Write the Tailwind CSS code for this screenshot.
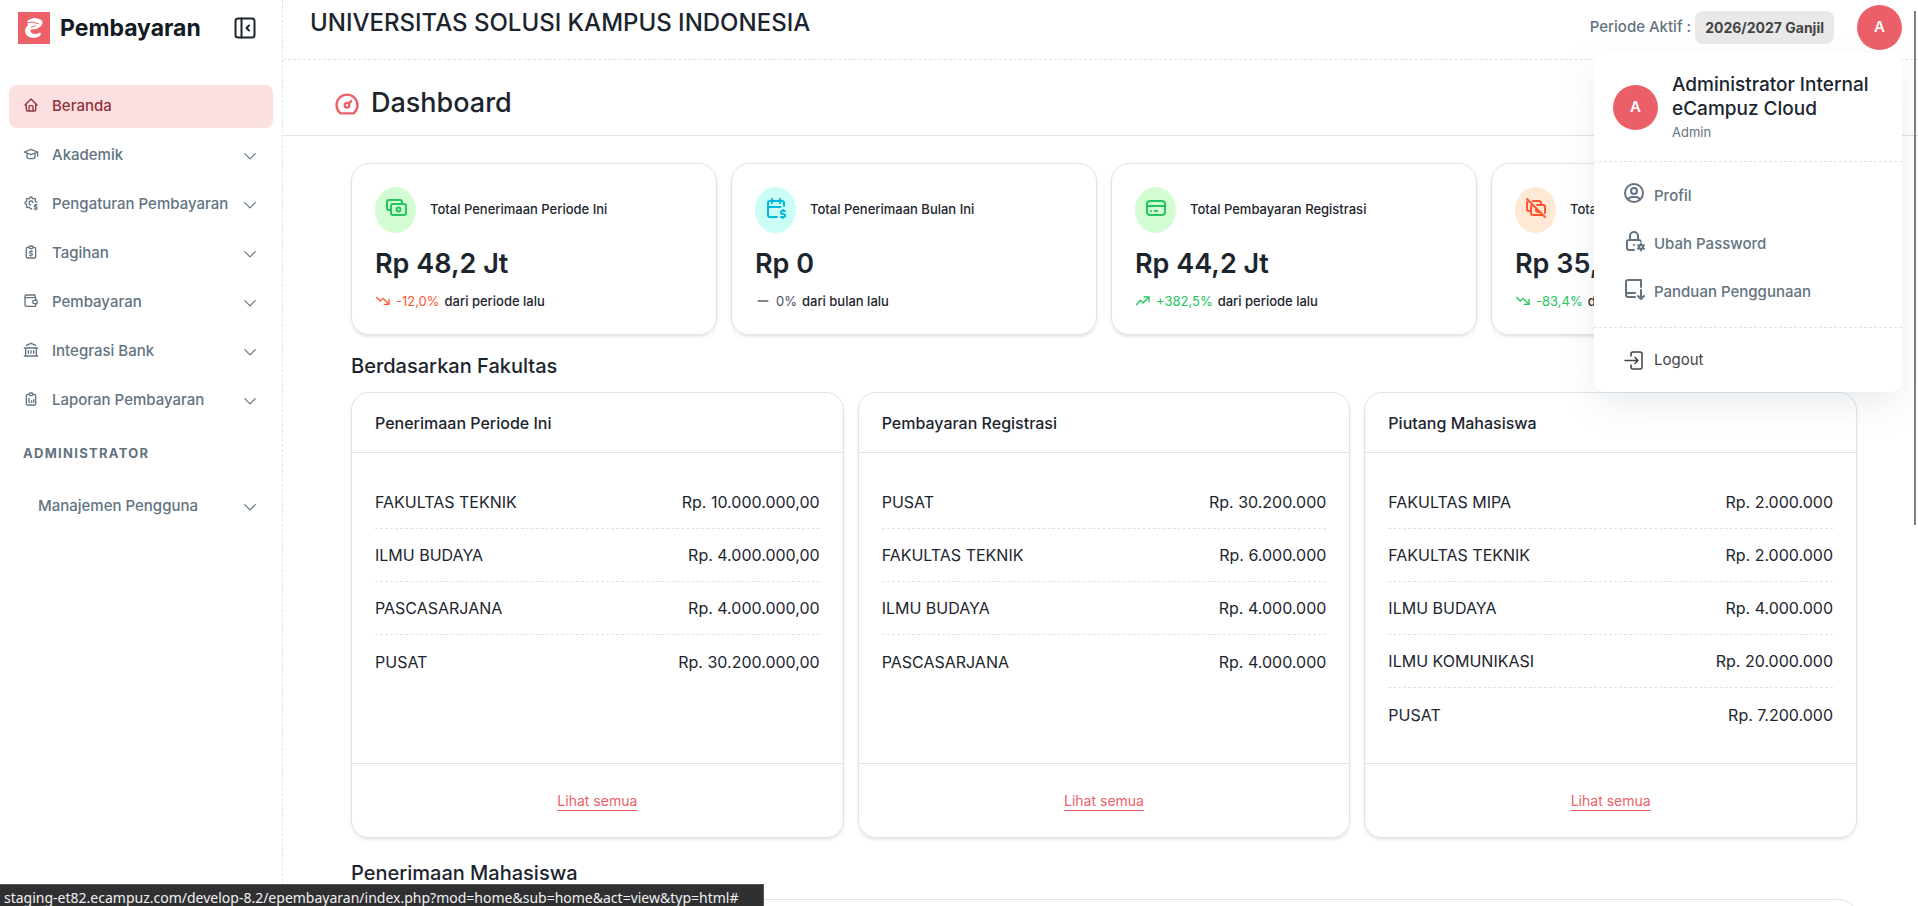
<!DOCTYPE html>
<html lang="id">
<head>
<meta charset="utf-8">
<title>Dashboard Pembayaran</title>
<meta name="viewport" content="width=device-width, initial-scale=1">
<script src="https://cdn.jsdelivr.net/npm/@tailwindcss/browser@4"></script>
</head>
<body class="relative flex h-screen overflow-hidden bg-white font-['Inter','Liberation_Sans',sans-serif] text-[15px] text-[#1c252e]">

<svg class="hidden" aria-hidden="true">
  <defs>
    <symbol id="down" viewBox="0 0 24 24"><path d="M3 8l9 9l9 -9"/></symbol>
    <symbol id="trend-down" viewBox="0 0 24 24"><path d="M2 6l6 6l4 -4l9 9"/><path d="M21 9v8h-8"/></symbol>
    <symbol id="trend-up" viewBox="0 0 24 24"><path d="M2 18l6 -7l4 4l9 -9"/><path d="M13 6h8v8"/></symbol>
  </defs>
</svg>

<aside class="flex w-[283px] shrink-0 flex-col border-r border-dashed border-[#dfe3e8]">
  <div class="flex h-14 items-center pl-[18px] pr-[25px]">
    <svg class="size-8 shrink-0" viewBox="0 0 32 32" role="img" aria-label="Logo eCampuz">
      <rect width="32" height="32" fill="#ec6168"/>
      <path d="M9 9.500Q12 6 17 6Q22 6.500 24.500 9Q25 12 23 14Q19 18 12.500 17.500Q12 21 15.500 21.800Q19 22.300 22.500 20.500Q23.500 23 21 24.500Q17 26.700 12.500 25.500Q7.500 24 7 19Q7 15.500 10 13.500Z" fill="#fff"/>
      <path d="M9 10.500Q15 9 21 12M13 14.800Q16 15 18 13" fill="none" stroke="#ec6168" stroke-width="1"/>
    </svg>
    <span class="ml-[10px] flex-1 text-[23px] font-bold text-[#141a21]">Pembayaran</span>
    <button type="button" aria-label="Ciutkan menu">
      <svg class="size-6" viewBox="0 0 24 24" fill="none" stroke="currentColor" stroke-width="2" stroke-linecap="round" stroke-linejoin="round"><rect x="2.500" y="2.500" width="19" height="19" rx="2.500"/><path d="M8.500 2.500v19M16 9.500l-2.500 2.500l2.500 2.500"/></svg>
    </button>
  </div>
  <nav class="mt-[29px] flex flex-col gap-[6px] pl-[9px] pr-[9px] font-medium text-[#637381]">
    <a href="#" class="flex h-[43px] items-center rounded-lg bg-[#fbdfe1] pl-[14px] pr-4 text-[#8f3238]">
      <svg class="mb-1 size-4" viewBox="0 0 24 24" fill="none" stroke="currentColor" stroke-width="2" stroke-linecap="round" stroke-linejoin="round"><path d="M5 12h-2l9 -9l9 9h-2v7a2 2 0 0 1 -2 2h-10a2 2 0 0 1 -2 -2v-7M9 21v-6a2 2 0 0 1 2 -2h2a2 2 0 0 1 2 2v6"/></svg>
      <span class="ml-[13px] flex-1">Beranda</span>
    </a>
    <a href="#" class="flex h-[43px] items-center pl-[14px] pr-4">
      <svg class="mb-1 size-4" viewBox="0 0 24 24" fill="none" stroke="currentColor" stroke-width="2" stroke-linecap="round" stroke-linejoin="round"><path d="M22 9l-10 -4l-10 4l10 4l10 -4v6M6 10.600v5.400a6 3 0 0 0 12 0v-5.400"/></svg>
      <span class="ml-[13px] flex-1">Akademik</span>
      <svg class="size-[14px]" fill="none" stroke="currentColor" stroke-width="2" stroke-linecap="round" stroke-linejoin="round"><use href="#down"/></svg>
    </a>
    <a href="#" class="flex h-[43px] items-center pl-[14px] pr-4">
      <svg class="mb-1 size-4" viewBox="0 0 24 24" fill="none" stroke="currentColor" stroke-width="2" stroke-linecap="round" stroke-linejoin="round"><path d="M13.038 20.666c-.902 .665 -2.393 .337 -2.713 -.983a1.724 1.724 0 0 0 -2.573 -1.066c-1.543 .94 -3.310 -.826 -2.370 -2.370a1.724 1.724 0 0 0 -1.065 -2.572c-1.756 -.426 -1.756 -2.924 0 -3.350a1.724 1.724 0 0 0 1.066 -2.573c-.940 -1.543 .826 -3.310 2.370 -2.370c1 .608 2.296 .070 2.572 -1.065c.426 -1.756 2.924 -1.756 3.350 0a1.724 1.724 0 0 0 2.573 1.066c1.543 -.940 3.310 .826 2.370 2.370a1.724 1.724 0 0 0 1.065 2.572c.500 .121 .857 .410 1.071 .765M14.882 11.165a3 3 0 1 0 -3.397 3.791M21 15h-2.500a1.500 1.500 0 0 0 0 3h1a1.500 1.500 0 0 1 0 3h-2.500M19 21v1m0 -8v1"/></svg>
      <span class="ml-[13px] flex-1 whitespace-nowrap">Pengaturan Pembayaran</span>
      <svg class="size-[14px]" fill="none" stroke="currentColor" stroke-width="2" stroke-linecap="round" stroke-linejoin="round"><use href="#down"/></svg>
    </a>
    <a href="#" class="flex h-[43px] items-center pl-[14px] pr-4">
      <svg class="mb-1 size-4" viewBox="0 0 24 24" fill="none" stroke="currentColor" stroke-width="2" stroke-linecap="round" stroke-linejoin="round"><path d="M9 5h-2a2 2 0 0 0 -2 2v12a2 2 0 0 0 2 2h10a2 2 0 0 0 2 -2v-12a2 2 0 0 0 -2 -2h-2M11 3h2a2 2 0 0 1 0 4h-2a2 2 0 0 1 0 -4M14 11h-2.500a1.500 1.500 0 0 0 0 3h1a1.500 1.500 0 0 1 0 3h-2.500M12 17v1m0 -8v1"/></svg>
      <span class="ml-[13px] flex-1">Tagihan</span>
      <svg class="size-[14px]" fill="none" stroke="currentColor" stroke-width="2" stroke-linecap="round" stroke-linejoin="round"><use href="#down"/></svg>
    </a>
    <a href="#" class="flex h-[43px] items-center pl-[14px] pr-4">
      <svg class="mb-1 size-4" viewBox="0 0 24 24" fill="none" stroke="currentColor" stroke-width="2" stroke-linecap="round" stroke-linejoin="round"><path d="M18 7v-3a1 1 0 0 0 -1 -1h-12a2 2 0 0 0 0 4h13a1 1 0 0 1 1 1v3M3 5v13a2 2 0 0 0 2 2h13a1 1 0 0 0 1 -1v-2M21 11v5h-4a2.500 2.500 0 0 1 0 -5z"/></svg>
      <span class="ml-[13px] flex-1">Pembayaran</span>
      <svg class="size-[14px]" fill="none" stroke="currentColor" stroke-width="2" stroke-linecap="round" stroke-linejoin="round"><use href="#down"/></svg>
    </a>
    <a href="#" class="flex h-[43px] items-center pl-[14px] pr-4">
      <svg class="mb-1 size-4" viewBox="0 0 24 24" fill="none" stroke="currentColor" stroke-width="2" stroke-linecap="round" stroke-linejoin="round"><path d="M2 21h20M2 9h20M5 5l7 -3l7 3M4 9v12M20 9v12M8 13v4M12 13v4M16 13v4"/></svg>
      <span class="ml-[13px] flex-1">Integrasi Bank</span>
      <svg class="size-[14px]" fill="none" stroke="currentColor" stroke-width="2" stroke-linecap="round" stroke-linejoin="round"><use href="#down"/></svg>
    </a>
    <a href="#" class="flex h-[43px] items-center pl-[14px] pr-4">
      <svg class="mb-1 size-4" viewBox="0 0 24 24" fill="none" stroke="currentColor" stroke-width="2" stroke-linecap="round" stroke-linejoin="round"><path d="M9 5h-2a2 2 0 0 0 -2 2v12a2 2 0 0 0 2 2h10a2 2 0 0 0 2 -2v-12a2 2 0 0 0 -2 -2h-2M11 3h2a2 2 0 0 1 0 4h-2a2 2 0 0 1 0 -4M9 11v6h1M13 15v2M16 13v4"/></svg>
      <span class="ml-[13px] flex-1">Laporan Pembayaran</span>
      <svg class="size-[14px]" fill="none" stroke="currentColor" stroke-width="2" stroke-linecap="round" stroke-linejoin="round"><use href="#down"/></svg>
    </a>
    <h2 class="mt-4 flex h-5 items-center pl-[14px] text-[13px] font-bold tracking-widest">ADMINISTRATOR</h2>
    <a href="#" class="mt-[15px] flex h-[43px] items-center pl-[29px] pr-4">
      <span class="flex-1">Manajemen Pengguna</span>
      <svg class="size-[14px]" fill="none" stroke="currentColor" stroke-width="2" stroke-linecap="round" stroke-linejoin="round"><use href="#down"/></svg>
    </a>
  </nav>
</aside>

<div class="flex min-w-0 flex-1 flex-col">
  <header class="flex h-[60px] shrink-0 items-start border-b border-dashed border-[#dfe3e8] pl-[27px] pr-4 pt-[5px]">
    <span class="flex-1 text-[24px] leading-9 font-medium">UNIVERSITAS SOLUSI KAMPUS INDONESIA</span>
    <div class="flex h-[45px] items-center">
      <span class="mr-1 font-medium text-[#637381]">Periode Aktif :</span>
      <span class="flex h-[33px] items-center rounded-lg bg-[#e9e9e9] px-[10px] text-[14px] font-bold text-[#444]">2026/2027 Ganjil</span>
      <button type="button" aria-haspopup="menu" aria-expanded="true" class="ml-[23px] size-[45px] rounded-full bg-[#eb6068] text-[15px] font-semibold text-white">A</button>
    </div>
  </header>
  <main class="flex-1 overflow-hidden">
    <div class="flex h-[76px] items-center gap-[10px] border-b border-[#dfe3e8] pl-[50px] pt-[12px]">
      <svg class="size-7 text-[#ec6168]" viewBox="0 0 24 24" fill="none" stroke="currentColor" stroke-width="2" stroke-linecap="round" stroke-linejoin="round"><circle cx="12" cy="13" r="2"/><path d="M13.450 11.550l2.050 -2.050M6.400 20a9 9 0 1 1 11.200 0z"/></svg>
      <h1 class="text-[27px] font-medium">Dashboard</h1>
    </div>
    <div class="pl-[68px] pr-[61px] pt-[27px]">
      <section class="grid grid-cols-4 gap-[14px]">
        <article class="h-[172px] rounded-[18px] border border-[#dfe3e8] px-[23px] pt-[23px] shadow-[0_2px_3px_rgba(145,158,171,0.25)]">
          <div class="flex items-center gap-[14px]">
            <span class="flex h-[46px] w-[41px] shrink-0 items-center justify-center rounded-[50%] bg-[#d3fcd2] pb-[5px]"><svg class="size-6 text-[#22c55e]" viewBox="0 0 24 24" fill="none" stroke="currentColor" stroke-width="2" stroke-linecap="round" stroke-linejoin="round"><rect x="7" y="8" width="15" height="11" rx="2"/><circle cx="14.500" cy="13.500" r="2"/><path d="M18 8v-2a2 2 0 0 0 -2 -2h-11a2 2 0 0 0 -2 2v6a2 2 0 0 0 2 2h2"/></svg></span>
            <h2 class="text-[13px] font-medium">Total Penerimaan Periode Ini</h2>
          </div>
          <p class="mt-[13px] text-[27px] leading-9 font-semibold">Rp 48,2 Jt</p>
          <p class="mt-[9px] flex items-center gap-[5px] text-[13px] leading-5 text-[#ff5630]"><svg class="size-4" fill="none" stroke="currentColor" stroke-width="2"><use href="#trend-down"/></svg>-12,0% <span class="font-medium text-[#1c252e]">dari periode lalu</span></p>
        </article>
        <article class="h-[172px] rounded-[18px] border border-[#dfe3e8] px-[23px] pt-[23px] shadow-[0_2px_3px_rgba(145,158,171,0.25)]">
          <div class="flex items-center gap-[14px]">
            <span class="flex h-[46px] w-[41px] shrink-0 items-center justify-center rounded-[50%] bg-[#cafdf5] pb-[5px]"><svg class="size-6 text-[#00b8d9]" viewBox="0 0 24 24" fill="none" stroke="currentColor" stroke-width="2" stroke-linecap="round" stroke-linejoin="round"><path d="M13 21h-7a2 2 0 0 1 -2 -2v-12a2 2 0 0 1 2 -2h12a2 2 0 0 1 2 2v3M16 3v4M8 3v4M4 11h12.500M21 15h-2.500a1.500 1.500 0 0 0 0 3h1a1.500 1.500 0 0 1 0 3h-2.500M19 21v1M19 14v1"/></svg></span>
            <h2 class="text-[13px] font-medium">Total Penerimaan Bulan Ini</h2>
          </div>
          <p class="mt-[13px] text-[27px] leading-9 font-semibold">Rp 0</p>
          <p class="mt-[9px] flex items-center gap-[5px] text-[13px] leading-5 text-[#454f5b]"><svg class="size-4" viewBox="0 0 24 24" fill="none" stroke="currentColor" stroke-width="2"><path d="M4 12h16"/></svg>0% <span class="font-medium text-[#1c252e]">dari bulan lalu</span></p>
        </article>
        <article class="h-[172px] rounded-[18px] border border-[#dfe3e8] px-[23px] pt-[23px] shadow-[0_2px_3px_rgba(145,158,171,0.25)]">
          <div class="flex items-center gap-[14px]">
            <span class="flex h-[46px] w-[41px] shrink-0 items-center justify-center rounded-[50%] bg-[#d3fcd2] pb-[5px]"><svg class="size-6 text-[#22c55e]" viewBox="0 0 24 24" fill="none" stroke="currentColor" stroke-width="2" stroke-linecap="round" stroke-linejoin="round"><rect x="3" y="5" width="18" height="14" rx="3"/><path d="M3 10h18M7 15h.01M11 15h2"/></svg></span>
            <h2 class="text-[13px] font-medium">Total Pembayaran Registrasi</h2>
          </div>
          <p class="mt-[13px] text-[27px] leading-9 font-semibold">Rp 44,2 Jt</p>
          <p class="mt-[9px] flex items-center gap-[5px] text-[13px] leading-5 text-[#22c55e]"><svg class="size-4" fill="none" stroke="currentColor" stroke-width="2"><use href="#trend-up"/></svg>+382,5% <span class="font-medium text-[#1c252e]">dari periode lalu</span></p>
        </article>
        <article class="h-[172px] rounded-[18px] border border-[#dfe3e8] px-[23px] pt-[23px] shadow-[0_2px_3px_rgba(145,158,171,0.25)]">
          <div class="flex items-center gap-[14px]">
            <span class="flex h-[46px] w-[41px] shrink-0 items-center justify-center rounded-[50%] bg-[#ffe9d5] pb-[5px]"><svg class="size-6 text-[#ff5630]" viewBox="0 0 24 24" fill="none" stroke="currentColor" stroke-width="2" stroke-linecap="round" stroke-linejoin="round"><path d="M13 9h6a2 2 0 0 1 2 2v6m-2 2h-10a2 2 0 0 1 -2 -2v-6a2 2 0 0 1 2 -2M12.582 12.590a2 2 0 0 0 2.830 2.826M17 9v-2a2 2 0 0 0 -2 -2h-6m-4 0a2 2 0 0 0 -2 2v6a2 2 0 0 0 2 2h2M3 3l18 18"/></svg></span>
            <h2 class="text-[13px] font-medium">Total</h2>
          </div>
          <p class="mt-[13px] text-[27px] leading-9 font-semibold">Rp 35,</p>
          <p class="mt-[9px] flex items-center gap-[5px] text-[13px] leading-5 text-[#22c55e]"><svg class="size-4" fill="none" stroke="currentColor" stroke-width="2"><use href="#trend-down"/></svg>-83,4% <span class="font-medium text-[#1c252e]">dari</span></p>
        </article>
      </section>

      <h2 class="mt-[17px] text-[20px] leading-7 font-medium">Berdasarkan Fakultas</h2>
      <section class="mt-3 grid grid-cols-3 gap-[14px]">
        <article class="flex h-[446px] flex-col rounded-[18px] border border-[#dfe3e8] shadow-[0_2px_3px_rgba(145,158,171,0.25)]">
          <h3 class="flex h-[60px] shrink-0 items-center border-b border-[#dfe3e8] px-[23px] text-[16px] font-medium">Penerimaan Periode Ini</h3>
          <dl class="flex-1 divide-y divide-dashed divide-[#dfe3e8] px-[23px] pt-[23px] text-[16px]">
            <div class="flex h-[53px] items-center justify-between"><dt>FAKULTAS TEKNIK</dt><dd>Rp. 10.000.000,00</dd></div>
            <div class="flex h-[53px] items-center justify-between"><dt>ILMU BUDAYA</dt><dd>Rp. 4.000.000,00</dd></div>
            <div class="flex h-[53px] items-center justify-between"><dt>PASCASARJANA</dt><dd>Rp. 4.000.000,00</dd></div>
            <div class="flex h-[53px] items-center justify-between"><dt>PUSAT</dt><dd>Rp. 30.200.000,00</dd></div>
          </dl>
          <div class="flex h-[74px] shrink-0 items-center justify-center border-t border-[#dfe3e8]"><a href="#" class="text-[14px] text-[#ec6168] underline underline-offset-4">Lihat semua</a></div>
        </article>
        <article class="flex h-[446px] flex-col rounded-[18px] border border-[#dfe3e8] shadow-[0_2px_3px_rgba(145,158,171,0.25)]">
          <h3 class="flex h-[60px] shrink-0 items-center border-b border-[#dfe3e8] px-[23px] text-[16px] font-medium">Pembayaran Registrasi</h3>
          <dl class="flex-1 divide-y divide-dashed divide-[#dfe3e8] px-[23px] pt-[23px] text-[16px]">
            <div class="flex h-[53px] items-center justify-between"><dt>PUSAT</dt><dd>Rp. 30.200.000</dd></div>
            <div class="flex h-[53px] items-center justify-between"><dt>FAKULTAS TEKNIK</dt><dd>Rp. 6.000.000</dd></div>
            <div class="flex h-[53px] items-center justify-between"><dt>ILMU BUDAYA</dt><dd>Rp. 4.000.000</dd></div>
            <div class="flex h-[53px] items-center justify-between"><dt>PASCASARJANA</dt><dd>Rp. 4.000.000</dd></div>
          </dl>
          <div class="flex h-[74px] shrink-0 items-center justify-center border-t border-[#dfe3e8]"><a href="#" class="text-[14px] text-[#ec6168] underline underline-offset-4">Lihat semua</a></div>
        </article>
        <article class="flex h-[446px] flex-col rounded-[18px] border border-[#dfe3e8] shadow-[0_2px_3px_rgba(145,158,171,0.25)]">
          <h3 class="flex h-[60px] shrink-0 items-center border-b border-[#dfe3e8] px-[23px] text-[16px] font-medium">Piutang Mahasiswa</h3>
          <dl class="flex-1 divide-y divide-dashed divide-[#dfe3e8] px-[23px] pt-[23px] text-[16px]">
            <div class="flex h-[53px] items-center justify-between"><dt>FAKULTAS MIPA</dt><dd>Rp. 2.000.000</dd></div>
            <div class="flex h-[53px] items-center justify-between"><dt>FAKULTAS TEKNIK</dt><dd>Rp. 2.000.000</dd></div>
            <div class="flex h-[53px] items-center justify-between"><dt>ILMU BUDAYA</dt><dd>Rp. 4.000.000</dd></div>
            <div class="flex h-[53px] items-center justify-between"><dt>ILMU KOMUNIKASI</dt><dd>Rp. 20.000.000</dd></div>
            <div class="flex h-[53px] items-center justify-between"><dt>PUSAT</dt><dd>Rp. 7.200.000</dd></div>
          </dl>
          <div class="flex h-[74px] shrink-0 items-center justify-center border-t border-[#dfe3e8]"><a href="#" class="text-[14px] text-[#ec6168] underline underline-offset-4">Lihat semua</a></div>
        </article>
      </section>

      <h2 class="mt-[21px] text-[20px] leading-7 font-medium">Penerimaan Mahasiswa</h2>
      <section class="mt-3 h-40 rounded-[18px] border border-[#dfe3e8]"></section>
    </div>
  </main>
</div>

<div class="absolute right-4 top-[53px] flex w-[308px] flex-col rounded-[10px] bg-white shadow-[0_12px_36px_-4px_rgba(145,158,171,0.24)]">
  <div class="flex h-[109px] items-center border-b border-dashed border-[#dfe3e8] pl-[19px]">
    <span class="flex size-[45px] shrink-0 items-center justify-center rounded-full bg-[#eb6068] text-[15px] font-semibold text-white">A</span>
    <div class="ml-[14px] pt-[2px]">
      <p class="text-[19px] leading-6 font-medium whitespace-nowrap">Administrator Internal<br>eCampuz Cloud</p>
      <p class="text-[13px] leading-[22px] text-[#637381]">Admin</p>
    </div>
  </div>
  <div class="flex h-[166px] flex-col border-b border-dashed border-[#dfe3e8] pl-[28px] pt-[10px] font-medium text-[#637381]">
    <a href="#" class="flex h-12 items-center gap-2"><svg class="mb-[6px] size-6" viewBox="0 0 24 24" fill="none" stroke="currentColor" stroke-width="2" stroke-linecap="round" stroke-linejoin="round"><circle cx="12" cy="12" r="9"/><circle cx="12" cy="10" r="3"/><path d="M6.168 18.849a4 4 0 0 1 3.832 -2.849h4a4 4 0 0 1 3.834 2.855"/></svg>Profil</a>
    <a href="#" class="flex h-12 items-center gap-2"><svg class="mb-[6px] size-6" viewBox="0 0 24 24" fill="none" stroke="currentColor" stroke-width="2" stroke-linecap="round" stroke-linejoin="round"><path d="M12 21h-5a2 2 0 0 1 -2 -2v-6a2 2 0 0 1 2 -2h10a2 2 0 0 1 1.800 1.100M8 11v-4a4 4 0 1 1 8 0v4M12 16h.01"/><circle cx="19" cy="18" r="2"/><path d="M19 14.500v1.500M19 20v1.500M22 16.300l-1.300 .700M17.300 19l-1.300 .700M16 16.300l1.300 .700M20.700 19l1.300 .700"/></svg>Ubah Password</a>
    <a href="#" class="flex h-12 items-center gap-2"><svg class="mb-[6px] size-6" viewBox="0 0 24 24" fill="none" stroke="currentColor" stroke-width="2" stroke-linecap="round" stroke-linejoin="round"><path d="M13 20h-7a2 2 0 0 1 -2 -2v-13a2 2 0 0 1 2 -2h13v7M13 16h-7a2 2 0 0 0 -2 2M19 13v9M22 19l-3 3l-3 -3"/></svg>Panduan Penggunaan</a>
  </div>
  <a href="#" class="flex h-16 items-center gap-2 pl-[28px] text-[#444]"><svg class="size-6" viewBox="0 0 24 24" fill="none" stroke="currentColor" stroke-width="1.500" stroke-linecap="round" stroke-linejoin="round"><path d="M9 8v-2a2 2 0 0 1 2 -2h7a2 2 0 0 1 2 2v13a2 2 0 0 1 -2 2h-7a2 2 0 0 1 -2 -2v-2M3 12.500h13l-3 -3M13 15.500l3 -3"/></svg>Logout</a>
</div>

<div class="absolute right-[2px] top-[11px] h-[514px] w-[2px] bg-[#808080]"></div>
<div class="absolute bottom-0 left-0 flex h-[22px] items-end border-t border-r border-[#555] bg-[#303033] pl-1 pr-6 font-['Noto_Sans',sans-serif] text-[14px] leading-4 text-[#f1f1f1]">staging-et82.ecampuz.com/develop-8.2/epembayaran/index.php?mod=home&amp;sub=home&amp;act=view&amp;typ=html#</div>
</body>
</html>
